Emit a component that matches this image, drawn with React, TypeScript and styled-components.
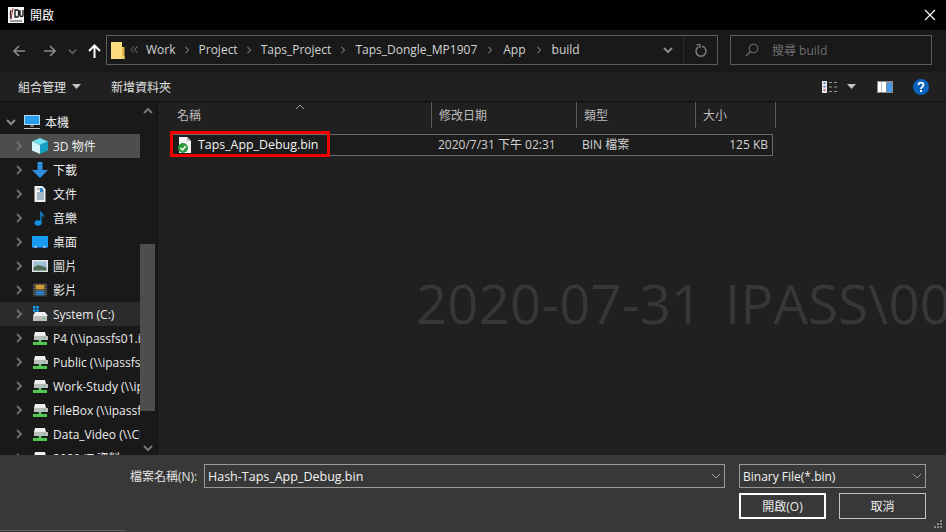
import styled, { createGlobalStyle } from "styled-components";
import { FC, Fragment, ReactNode } from "react";

const GlobalStyle = createGlobalStyle`
  html, body {
    margin: 0;
    padding: 0;
    background: #000;
  }
  * {
    box-sizing: border-box;
  }
`;

const fonts = `"Open Sans", "Noto Sans CJK TC", sans-serif`;

const Chevron: FC<{ dir?: "right" | "down" | "up"; color?: string; size?: number; w?: number }> = ({
  dir = "right",
  color = "#6e6e6e",
  size = 10,
  w = 2,
}) => {
  const d = dir === "right" ? "M3 1l4 4-4 4" : dir === "down" ? "M1 3l4 4 4-4" : "M1 7l4-4 4 4";
  return (
    <svg width={size} height={size} viewBox="0 0 10 10">
      <path d={d} fill="none" stroke={color} strokeWidth={w} />
    </svg>
  );
};

const DoubleLeft: FC = () => (
  <svg width="8" height="7" viewBox="0 0 8 7">
    <path d="M4 .5L1 3.500 4 6.500M7.500 .5l-3 3 3 3" fill="none" stroke="#7a7a7a" />
  </svg>
);

const Caret: FC = () => (
  <svg width="9" height="5" viewBox="0 0 9 5">
    <path d="M0 0h9L4.500 5z" fill="#c4c4c4" />
  </svg>
);

const NavArrow: FC<{ right?: boolean; color: string }> = ({ right, color }) => (
  <svg width="14" height="14" viewBox="0 0 14 14">
    <path
      d={right ? "M1 7h11M7 2l5 5-5 5" : "M13 7H2M7 2L2 7l5 5"}
      fill="none"
      stroke={color}
      strokeWidth="1.700"
    />
  </svg>
);

const UpArrow: FC = () => (
  <svg width="13" height="14" viewBox="0 0 13 14">
    <path d="M6.500 14V2M1 7l5.500-5.500L12 7" fill="none" stroke="#fff" strokeWidth="2" />
  </svg>
);

const FolderIcon: FC = () => (
  <svg width="14" height="17" viewBox="0 0 14 17">
    <path d="M0 0h11v17H0z" fill="#fbdc7e" />
    <path d="M11 5h2.500v12H11z" fill="#e2b84f" />
    <path d="M10 14h3.500v3H10z" fill="#f3cf6a" />
  </svg>
);

const RefreshIcon: FC = () => (
  <svg width="12" height="13" viewBox="0 0 12 13">
    <path d="M3 3.200a5 5 0 1 0 4-.900" fill="none" stroke="#7d7d7d" strokeWidth="1.500" />
    <path d="M1.500 .5h3.200v3.500" fill="none" stroke="#7d7d7d" strokeWidth="1.500" />
  </svg>
);

const SearchIcon: FC = () => (
  <svg width="14" height="14" viewBox="0 0 14 14">
    <circle cx="8.500" cy="5.500" r="4.300" fill="none" stroke="#6d6d6d" strokeWidth="1.100" />
    <path d="M5.500 8.500L1 13" stroke="#6d6d6d" strokeWidth="1.300" />
  </svg>
);

const CloseIcon: FC = () => (
  <svg width="12" height="12" viewBox="0 0 12 12">
    <path d="M1 1l10 10M11 1L1 11" stroke="#fff" strokeWidth="1.100" />
  </svg>
);

const AppLogo: FC = () => (
  <svg width="16" height="16" viewBox="0 0 16 16">
    <rect width="16" height="16" fill="#f4f4f4" />
    <path d="M5 1L3 12" stroke="#b3342c" strokeWidth="1" />
    <path d="M3 3c-1 3-1 6 0 9" fill="none" stroke="#1c1c1c" strokeWidth="1.200" />
    <path d="M7 3h2.500c1.500 0 1.500 7 0 7H7zM12 3v5c0 2 3 2 3 0V3" fill="none" stroke="#1c1c1c" strokeWidth="1.400" />
    <rect x="2" y="13" width="12" height="2" fill="#9a9a9a" />
  </svg>
);

const ViewIcon: FC = () => (
  <svg width="16" height="12" viewBox="0 0 16 12">
    <rect width="5" height="12" fill="#e8e8e8" />
    <rect x="1.500" y="1.500" width="2" height="1.500" fill="#3a78c4" />
    <rect x="1.500" y="5" width="2" height="1.500" fill="#3a78c4" />
    <rect x="1.500" y="8.500" width="2" height="1.500" fill="#c4453a" />
    <path d="M7 1.500h3M12 1.500h3M7 6h3M12 6h3M7 10.500h3M12 10.500h3" stroke="#9b9b9b" />
  </svg>
);

const PaneIcon: FC = () => (
  <svg width="16" height="12" viewBox="0 0 16 12">
    <rect width="16" height="12" fill="#8e8e8e" />
    <rect x="1" y="1" width="8" height="10" fill="#fff" />
    <rect x="4" y="1" width="1" height="10" fill="#bdbdbd" />
    <rect x="10" y="2" width="5" height="9" fill="#3d9be9" />
  </svg>
);

const HelpIcon: FC = () => (
  <svg width="16" height="16" viewBox="0 0 16 16">
    <circle cx="8" cy="8" r="8" fill="#0a62bd" />
    <path d="M5.500 6c0-3.200 5-3.200 5 0 0 2-2.500 1.800-2.500 4" fill="none" stroke="#fff" strokeWidth="1.800" />
    <rect x="7" y="11" width="2" height="2" fill="#fff" />
  </svg>
);

const ThisPcIcon: FC = () => (
  <svg width="16" height="16" viewBox="0 0 16 16">
    <rect y="1" width="16" height="10" fill="#b8dcf5" />
    <rect x="1" y="2" width="14" height="8" fill="#2a9fec" />
    <rect x="6.500" y="11" width="3" height="2" fill="#8a8a8a" />
    <rect y="14" width="16" height="1" fill="#c9c9c9" />
  </svg>
);

const CubeIcon: FC = () => (
  <svg width="16" height="16" viewBox="0 0 16 16">
    <path d="M8 0l8 3.500L8 7 0 3.500z" fill="#6fe0ee" />
    <path d="M0 3.500L8 7v9l-8-3.500z" fill="#d4f4f7" />
    <path d="M16 3.500L8 7v9l8-3.500z" fill="#149fc4" />
  </svg>
);

const DownloadIcon: FC = () => (
  <svg width="16" height="16" viewBox="0 0 16 16">
    <path d="M5.500 0h5v8H16l-8 8-8-8h5.500z" fill="#2f90e2" />
  </svg>
);

const DocIcon: FC = () => (
  <svg width="16" height="16" viewBox="0 0 16 16">
    <path d="M2.500 0h8l3 3v13h-11z" fill="#f1f1f1" />
    <path d="M5 3h3M8 5h4M5 7h7M5 9h7M5 11h7M5 13h7" stroke="#5a7d9a" />
    <rect x="8" y="2" width="3" height="4" fill="#2b86d4" />
  </svg>
);

const MusicIcon: FC = () => (
  <svg width="16" height="16" viewBox="0 0 16 16">
    <ellipse cx="6" cy="13" rx="3.500" ry="2.800" fill="#1291e6" />
    <path d="M8.300 13V0c.5 3 4.500 3.500 3.500 8-.5-2-2-3-2.300-3.500V13z" fill="#1291e6" />
  </svg>
);

const DesktopIcon: FC = () => (
  <svg width="16" height="16" viewBox="0 0 16 16">
    <rect y="2" width="16" height="12" fill="#1b9bf0" />
    <rect y="13" width="16" height="1" fill="#0e5f9c" />
    <rect x="2" y="12.500" width="3" height="1" fill="#d5ecff" />
    <rect x="11" y="12.500" width="3" height="1" fill="#d5ecff" />
  </svg>
);

const PictureIcon: FC = () => (
  <svg width="16" height="16" viewBox="0 0 16 16">
    <rect y="2" width="16" height="12" fill="#e4e4e4" />
    <rect x="1.500" y="3.500" width="13" height="9" fill="#9cc0d6" />
    <path d="M1.500 9l5-2 8 2.500v3h-13z" fill="#4f6f55" />
  </svg>
);

const VideoIcon: FC = () => (
  <svg width="16" height="16" viewBox="0 0 16 16">
    <rect x="1" y="1" width="14" height="14" fill="#2b2b2b" />
    <rect x="3.500" y="2.500" width="9" height="5" fill="#c99a35" />
    <rect x="3.500" y="8.500" width="9" height="5" fill="#3478b8" />
    <path d="M2 2v12M14 2v12" stroke="#999" strokeDasharray="1 1" />
  </svg>
);

const DriveIcon: FC<{ os?: boolean; net?: boolean }> = ({ os, net }) => (
  <svg width="16" height="16" viewBox="0 0 16 16">
    {os && (
      <g fill="#12a5f4">
        <rect x="1" y="0" width="2.500" height="2.500" />
        <rect x="4.300" y="0" width="2.500" height="2.500" />
        <rect x="1" y="3.300" width="2.500" height="2.500" />
        <rect x="4.300" y="3.300" width="2.500" height="2.500" />
      </g>
    )}
    <path d={net ? "M3 2h10l1 4H2z" : "M3 6h10l3 4H1z"} fill="#efefef" />
    <rect x={net ? 2 : 1} y={net ? 6 : 10} width="14" height={net ? 4 : 5} fill="#bdbdbd" />
    <rect x="11" y={net ? 7.500 : 12} width="2" height="1" fill="#45c94e" />
    {net && <path d="M6.500 10h3v2H15v3H1v-3h5.500z" fill="#53c653" />}
  </svg>
);

const BinFileIcon: FC = () => (
  <svg width="16" height="16" viewBox="0 0 16 16">
    <path d="M2 0h8l4 4v12H2z" fill="#f4f4f4" />
    <path d="M10 0v4h4z" fill="#bdbdbd" />
    <circle cx="6" cy="11" r="5" fill="#2c9a3d" />
    <path d="M3.500 11l2 2L8.800 9" fill="none" stroke="#fff" strokeWidth="1.500" />
  </svg>
);

const Window = styled.div`
  position: relative;
  width: 946px;
  height: 532px;
  display: flex;
  flex-direction: column;
  overflow: hidden;
  background: #202020;
  color: #e6e6e6;
  font-family: ${fonts};
  font-size: 12px;
`;

const Spacer = styled.span<{ $w: number }>`
  width: ${(p) => p.$w}px;
  flex: none;
`;

const TitleBar = styled.div`
  height: 30px;
  flex: none;
  display: flex;
  align-items: center;
  padding: 0 10px 0 8px;
  gap: 6px;
  background: #000;
  color: #fff;
`;

const CloseButton = styled.div`
  margin-left: auto;
  display: flex;
`;

const NavBar = styled.div`
  height: 42px;
  flex: none;
  display: flex;
  align-items: center;
  padding: 0 14px 0 12px;
  background: #191919;
`;

const NavButtons = styled.div`
  width: 94px;
  display: flex;
  align-items: center;
`;

const AddressBox = styled.div`
  width: 612px;
  height: 30px;
  margin-top: -2px;
  display: flex;
  align-items: center;
  border: 1px solid #5c5c5c;
  padding-left: 4px;
`;

const Crumbs = styled.div`
  flex: 1;
  display: flex;
  align-items: center;
  min-width: 0;
  margin-left: 5px;
  padding-bottom: 2px;
`;

const Crumb = styled.span`
  color: #d4d4d4;
  font-size: 12px;
`;

const CrumbSep = styled.span<{ $w: number }>`
  width: ${(p) => p.$w}px;
  padding-top: 2px;
  display: flex;
  justify-content: center;
`;

const AddressTail = styled.div`
  display: flex;
  align-items: center;
  height: 100%;
`;

const HistoryDrop = styled.div`
  width: 33px;
  height: 100%;
  display: flex;
  align-items: center;
  justify-content: center;
  padding-left: 2px;
  border-right: 1px solid #2b2b2b;
`;

const RefreshSlot = styled.div`
  width: 33px;
  display: flex;
  justify-content: center;
`;

const SearchBox = styled.div`
  width: 202px;
  height: 30px;
  margin: -2px 0 0 12px;
  display: flex;
  align-items: center;
  gap: 13px;
  padding: 0 0 1px 14px;
  border: 1px solid #5c5c5c;
  color: #6f6f6f;
`;

const CommandBar = styled.div`
  height: 30px;
  flex: none;
  display: flex;
  align-items: center;
  padding: 0 17px 0 18px;
  background: #202020;
  border-bottom: 1px solid #111;
  color: #e2e2e2;
`;

const CommandItem = styled.div<{ $gap?: number }>`
  display: flex;
  align-items: center;
  gap: 6px;
  margin-right: ${(p) => p.$gap ?? 0}px;
`;

const CommandRight = styled.div`
  margin-left: auto;
  display: flex;
  align-items: center;
`;

const Main = styled.div`
  flex: 1;
  min-height: 0;
  display: flex;
`;

const Sidebar = styled.div`
  width: 158px;
  flex: none;
  display: flex;
  background: #191919;
  border-right: 1px solid #121212;
`;

const NavList = styled.div`
  width: 140px;
  flex: none;
  padding-top: 8px;
  overflow: hidden;
`;

const NavRow = styled.div<{ $top?: boolean; $state?: "selected" | "hover" }>`
  height: 24px;
  display: flex;
  align-items: center;
  white-space: nowrap;
  padding-left: ${(p) => (p.$top ? 6 : 14)}px;
  color: #ececec;
  background: ${(p) =>
    p.$state === "selected" ? "#4d4d4d" : p.$state === "hover" ? "#2b2b2b" : "transparent"};

  svg {
    flex: none;
  }
`;

const NavToggle = styled.span`
  width: 18px;
  flex: none;
  display: flex;
`;

const NavLabel = styled.span`
  margin-left: 5px;
`;

const ScrollBar = styled.div`
  width: 15px;
  flex: none;
  display: flex;
  flex-direction: column;
  align-items: center;
  padding-top: 4px;
`;

const ScrollThumb = styled.div`
  width: 15px;
  height: 167px;
  margin-top: 128px;
  background: #4d4d4d;
`;

const ScrollDown = styled.div`
  margin-top: 32px;
  display: flex;
`;

const Content = styled.div`
  flex: 1;
  position: relative;
  background: #202020;
  padding-left: 12px;
`;

const Header = styled.div`
  height: 26px;
  display: flex;
`;

const HeaderCell = styled.div<{ $w: number }>`
  width: ${(p) => p.$w}px;
  flex: none;
  display: flex;
  align-items: center;
  padding-left: 7px;
  border-right: 1px solid #5a5a5a;
  color: #bdbdbd;
`;

const SortCaret = styled.span`
  position: absolute;
  left: 137px;
  top: 0;
  display: flex;
`;

const FileRow = styled.div`
  width: 602px;
  height: 22px;
  margin-top: 6px;
  margin-left: 1px;
  padding-bottom: 1px;
  display: flex;
  align-items: center;
  border: 1px solid #6a6a6a;
  background: #1c1c1c;
  color: #d2d2d2;
`;

const FileName = styled.div`
  width: 266px;
  flex: none;
  display: flex;
  align-items: center;
  gap: 5px;
  padding-left: 5px;
  color: #f4f4f4;
  font-size: 12.400px;
`;

const FileCell = styled.div<{ $w?: number; $right?: boolean }>`
  width: ${(p) => (p.$w ? `${p.$w}px` : "auto")};
  flex: ${(p) => (p.$w ? "none" : 1)};
  text-align: ${(p) => (p.$right ? "right" : "left")};
  padding-right: ${(p) => (p.$right ? 4 : 0)}px;
  padding-bottom: 1px;
`;

const RedMark = styled.div`
  position: absolute;
  left: 12px;
  top: 29px;
  width: 160px;
  height: 26px;
  border: 3px solid #f00000;
`;

const Watermark = styled.div`
  position: absolute;
  left: 258px;
  top: 164px;
  white-space: pre;
  font-size: 54.500px;
  letter-spacing: 0.200px;
  word-spacing: -3px;
  color: #373638;
`;

const Footer = styled.div`
  height: 77px;
  flex: none;
  position: relative;
  display: grid;
  grid-template-columns: 74px 521px 187px;
  grid-template-rows: 24px 26px;
  row-gap: 5px;
  padding: 9px 0 0 130px;
  background: #383838;

  &::after {
    content: "";
    position: absolute;
    left: 0;
    bottom: 1px;
    width: 126px;
    height: 1px;
    background: #5e5e5e;
  }
`;

const FieldLabel = styled.label`
  display: flex;
  align-items: center;
  color: #e2e2e2;
`;

const Field = styled.div`
  display: flex;
  align-items: center;
  justify-content: space-between;
  padding: 0 3px;
  border: 1px solid #9a9a9a;
  color: #f2f2f2;
  font-size: 12.500px;
`;

const TypeField = styled(Field)`
  margin-left: 14px;
  width: 187px;
  font-size: 12px;
`;

const ButtonRow = styled.div`
  grid-column: 3;
  margin-left: 14px;
  width: 187px;
  display: flex;
  justify-content: space-between;
`;

const DialogButton = styled.button<{ $primary?: boolean }>`
  width: 87px;
  height: 26px;
  padding: 0;
  background: #383838;
  color: #ececec;
  font-family: ${fonts};
  font-size: 12px;
  border: ${(p) => (p.$primary ? "2px solid #fff" : "1px solid #c4c4c4")};
`;

const Grip = styled.svg`
  position: absolute;
  right: 3px;
  bottom: 3px;
`;

const navItems: { label: string; icon: ReactNode; state?: "selected" | "hover" }[] = [
  { label: "3D 物件", icon: <CubeIcon />, state: "selected" },
  { label: "下載", icon: <DownloadIcon /> },
  { label: "文件", icon: <DocIcon /> },
  { label: "音樂", icon: <MusicIcon /> },
  { label: "桌面", icon: <DesktopIcon /> },
  { label: "圖片", icon: <PictureIcon /> },
  { label: "影片", icon: <VideoIcon /> },
  { label: "System (C:)", icon: <DriveIcon os />, state: "hover" },
  { label: "P4 (\\\\ipassfs01.ipass.com)", icon: <DriveIcon net /> },
  { label: "Public (\\\\ipassfs01.ipass.com)", icon: <DriveIcon net /> },
  { label: "Work-Study (\\\\ipassfs01)", icon: <DriveIcon net /> },
  { label: "FileBox (\\\\ipassfs01.ipass)", icon: <DriveIcon net /> },
  { label: "Data_Video (\\\\Cipassfs01)", icon: <DriveIcon net /> },
  { label: "2020 IT 資料", icon: <DriveIcon net /> },
];

const crumbs = [
  { name: "Work", sep: 23 },
  { name: "Project", sep: 23 },
  { name: "Taps_Project", sep: 24 },
  { name: "Taps_Dongle_MP1907", sep: 26 },
  { name: "App", sep: 26 },
  { name: "build", sep: 0 },
];

const App: FC = () => {
  return (
    <Window>
      <GlobalStyle />
      <TitleBar>
        <AppLogo />
        <span>開啟</span>
        <CloseButton>
          <CloseIcon />
        </CloseButton>
      </TitleBar>

      <NavBar>
        <NavButtons>
          <NavArrow color="#8a8a8a" />
          <Spacer $w={17} />
          <NavArrow right color="#8a8a8a" />
          <Spacer $w={11} />
          <Chevron dir="down" color="#5f5f5f" size={9} />
          <Spacer $w={11} />
          <UpArrow />
        </NavButtons>
        <AddressBox>
          <FolderIcon />
          <Crumbs>
            <DoubleLeft />
            <Spacer $w={8} />
            {crumbs.map((c) => (
              <Fragment key={c.name}>
                <Crumb>{c.name}</Crumb>
                {c.sep > 0 && (
                  <CrumbSep $w={c.sep}>
                    <Chevron size={8} w={1.5} />
                  </CrumbSep>
                )}
              </Fragment>
            ))}
          </Crumbs>
          <AddressTail>
            <HistoryDrop>
              <Chevron dir="down" color="#8a8a8a" size={10} />
            </HistoryDrop>
            <RefreshSlot>
              <RefreshIcon />
            </RefreshSlot>
          </AddressTail>
        </AddressBox>
        <SearchBox>
          <SearchIcon />
          <span>搜尋 build</span>
        </SearchBox>
      </NavBar>

      <CommandBar>
        <CommandItem $gap={30}>
          組合管理 <Caret />
        </CommandItem>
        <CommandItem>新增資料夾</CommandItem>
        <CommandRight>
          <ViewIcon />
          <Spacer $w={9} />
          <Caret />
          <Spacer $w={21} />
          <PaneIcon />
          <Spacer $w={20} />
          <HelpIcon />
        </CommandRight>
      </CommandBar>

      <Main>
        <Sidebar>
          <NavList>
            <NavRow $top>
              <NavToggle>
                <Chevron dir="down" size={10} color="#8c8c8c" />
              </NavToggle>
              <ThisPcIcon />
              <NavLabel>本機</NavLabel>
            </NavRow>
            {navItems.map((n) => (
              <NavRow key={n.label} $state={n.state}>
                <NavToggle>
                  <Chevron size={10} />
                </NavToggle>
                {n.icon}
                <NavLabel>{n.label}</NavLabel>
              </NavRow>
            ))}
          </NavList>
          <ScrollBar>
            <Chevron dir="up" color="#777" size={10} />
            <ScrollThumb />
            <ScrollDown>
              <Chevron dir="down" color="#777" size={10} />
            </ScrollDown>
          </ScrollBar>
        </Sidebar>

        <Content>
          <Header>
            <HeaderCell $w={262}>名稱</HeaderCell>
            <HeaderCell $w={145}>修改日期</HeaderCell>
            <HeaderCell $w={119}>類型</HeaderCell>
            <HeaderCell $w={80}>大小</HeaderCell>
          </Header>
          <SortCaret>
            <Chevron dir="up" color="#9a9a9a" size={10} w={1} />
          </SortCaret>
          <FileRow>
            <FileName>
              <BinFileIcon />
              Taps_App_Debug.bin
            </FileName>
            <FileCell $w={144}>2020/7/31 下午 02:31</FileCell>
            <FileCell $w={120}>BIN 檔案</FileCell>
            <FileCell $right>125 KB</FileCell>
          </FileRow>
          <RedMark />
          <Watermark>2020-07-31  IPASS\00</Watermark>
        </Content>
      </Main>

      <Footer>
        <FieldLabel>檔案名稱(N):</FieldLabel>
        <Field>
          Hash-Taps_App_Debug.bin
          <Chevron dir="down" color="#a0a0a0" size={10} w={1} />
        </Field>
        <TypeField>
          Binary File(*.bin)
          <Chevron dir="down" color="#a0a0a0" size={10} w={1} />
        </TypeField>
        <ButtonRow>
          <DialogButton $primary>開啟(O)</DialogButton>
          <DialogButton>取消</DialogButton>
        </ButtonRow>
        <Grip width="9" height="9" viewBox="0 0 9 9" fill="#8a8a8a">
          <rect x="6" y="0" width="2" height="2" />
          <rect x="3" y="3" width="2" height="2" />
          <rect x="6" y="3" width="2" height="2" />
          <rect x="0" y="6" width="2" height="2" />
          <rect x="3" y="6" width="2" height="2" />
          <rect x="6" y="6" width="2" height="2" />
        </Grip>
      </Footer>
    </Window>
  );
};

export default App;
